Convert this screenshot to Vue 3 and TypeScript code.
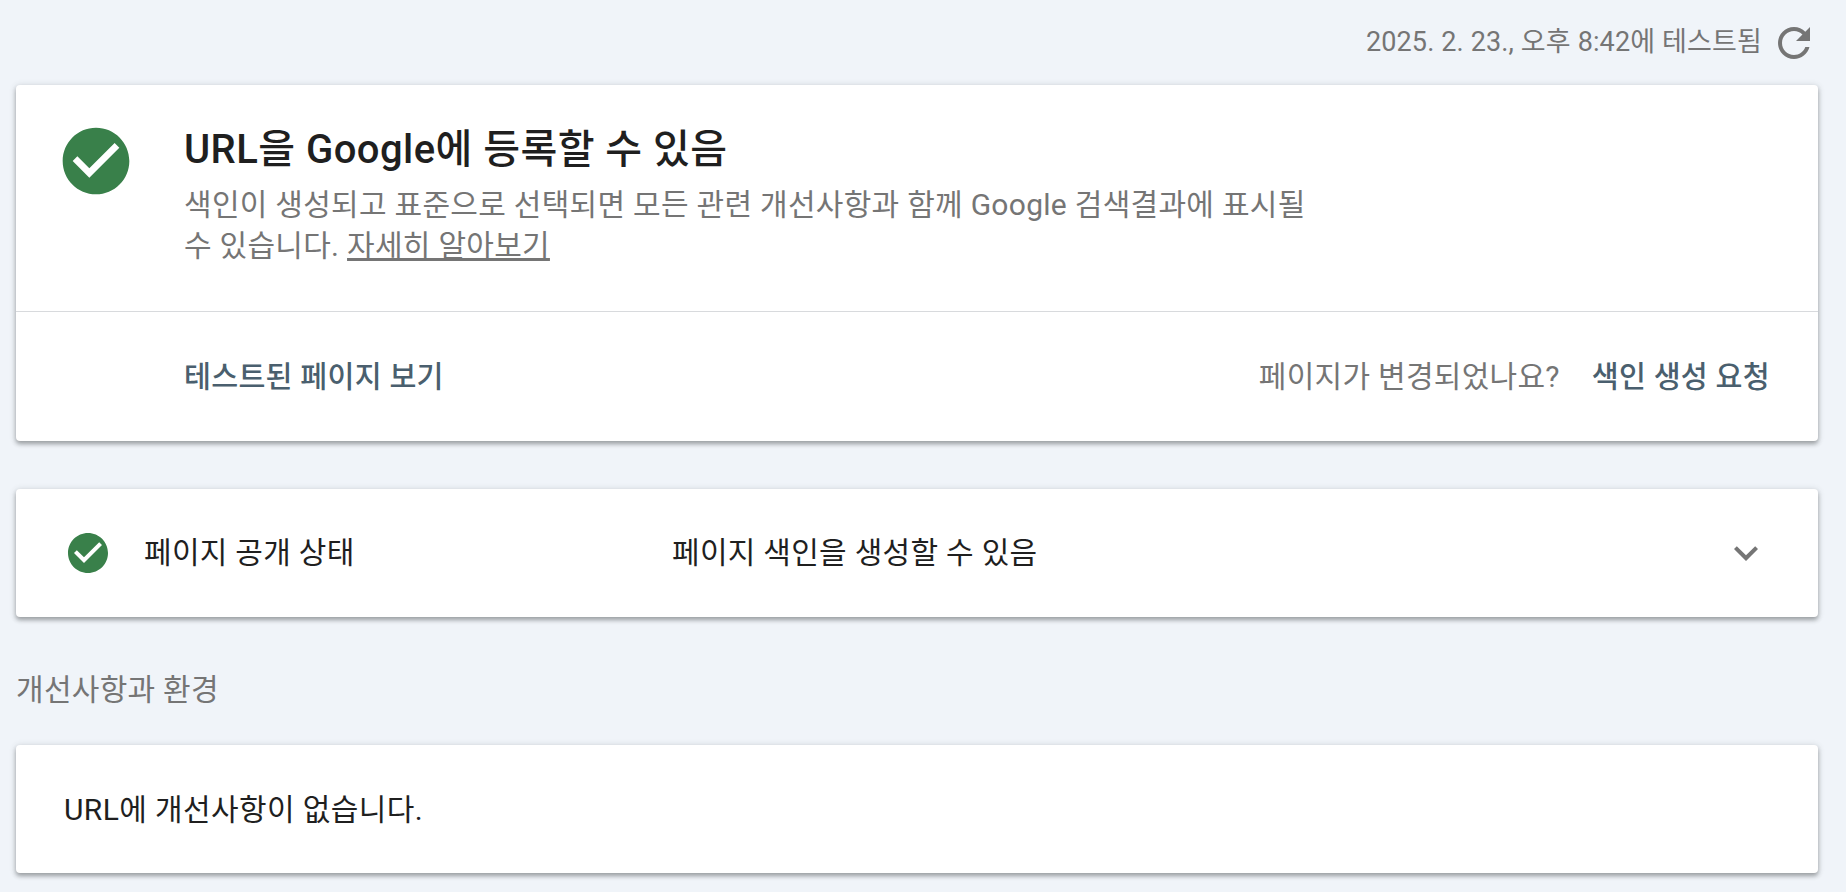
<script setup lang="ts">
const checkPath = 'M12 2C6.48 2 2 6.48 2 12s4.48 10 10 10 10-4.48 10-10S17.52 2 12 2zm-2 15l-5-5 1.41-1.41L10 14.17l7.59-7.59L19 8l-9 9z'
const refreshPath = 'M17.65 6.35C16.2 4.9 14.21 4 12 4c-4.42 0-7.99 3.58-7.99 8s3.57 8 7.99 8c3.73 0 6.84-2.55 7.73-6h-2.08c-.82 2.33-3.04 4-5.65 4-3.31 0-6-2.69-6-6s2.69-6 6-6c1.66 0 3.14.69 4.22 1.78L13 11h7V4l-2.35 2.35z'
const expandPath = 'M16.59 8.59L12 13.17 7.41 8.59 6 10l6 6 6-6z'
</script>

<template>
  <main class="page">
    <header class="stamp">
      <span class="stamp-text">2025. 2. 23., 오후 8:42에 테스트됨</span>
      <svg class="icon-48 grey" viewBox="0 0 24 24"><path :d="refreshPath" /></svg>
    </header>

    <section class="card result">
      <div class="result-top">
        <svg class="icon-80 green" viewBox="0 0 24 24"><path :d="checkPath" /></svg>
        <div class="result-copy">
          <h1 class="title">URL을 Google에 등록할 수 있음</h1>
          <p class="desc">색인이 생성되고 표준으로 선택되면 모든 관련 개선사항과 함께 Google 검색결과에 표시될 수 있습니다. <a class="learn">자세히 알아보기</a></p>
        </div>
      </div>
      <div class="result-actions">
        <span class="action">테스트된 페이지 보기</span>
        <span class="actions-right">
          <span class="question">페이지가 변경되었나요?</span>
          <span class="action">색인 생성 요청</span>
        </span>
      </div>
    </section>

    <section class="card status">
      <svg class="icon-48 green" viewBox="0 0 24 24"><path :d="checkPath" /></svg>
      <span class="status-label">페이지 공개 상태</span>
      <span class="status-value">페이지 색인을 생성할 수 있음</span>
      <svg class="icon-48 grey chevron" viewBox="0 0 24 24"><path :d="expandPath" /></svg>
    </section>

    <h2 class="section-title">개선사항과 환경</h2>

    <section class="card empty"><span>URL에 개선사항이 없습니다.</span></section>
  </main>
</template>

<style>
html, body { margin: 0; background: #f0f4f9; }
</style>

<style scoped>
.page {
  box-sizing: border-box;
  width: 1846px;
  height: 892px;
  padding: 0 28px 0 16px;
  background: #f0f4f9;
  font-family: Roboto, "Noto Sans CJK KR", sans-serif;
  color: #1f1f1f;
  letter-spacing: 0.28px;
  overflow: hidden;
}
.stamp {
  display: flex;
  justify-content: flex-end;
  align-items: center;
  height: 85px;
  gap: 8px;
  color: #757575;
  font-size: 27px;
  letter-spacing: 0.14px;
}
.stamp-text { margin-bottom: 6px; }
.icon-48 { width: 48px; height: 48px; flex: none; display: block; }
.icon-80 { width: 80px; height: 80px; flex: none; display: block; }
.green { fill: #39804a; }
.grey { fill: #757575; }
.card {
  background: #fff;
  border-radius: 4px;
  box-shadow: 0 3px 4px rgba(60, 64, 67, 0.4), 0 1px 6px 1px rgba(60, 64, 67, 0.14);
}
.result { height: 356px; }
.result-top {
  box-sizing: border-box;
  height: 227px;
  display: flex;
  padding: 36px 0 0 40px;
  gap: 48px;
  border-bottom: 1px solid #d8dadd;
}
.result-copy { width: 1150px; }
.title {
  margin: 0;
  font-size: 40px;
  font-weight: 500;
  line-height: 57px;
  letter-spacing: 0.45px;
}
.desc {
  margin: 6px 0 0;
  font-size: 30px;
  line-height: 41px;
  color: #757575;
}
.learn { text-decoration: underline; }
.result-actions {
  height: 129px;
  display: flex;
  align-items: center;
  justify-content: space-between;
  padding: 0 48px 6px 168px;
  box-sizing: border-box;
}
.actions-right { display: flex; align-items: center; gap: 32px; }
.action { font-size: 29.25px; font-weight: 500; color: #4a5f6e; }
.question { font-size: 30px; color: #757575; }
.status {
  margin-top: 48px;
  height: 128px;
  box-sizing: border-box;
  display: flex;
  align-items: center;
  padding: 0 48px;
  font-size: 30px;
}
.status-label { margin-left: 32px; width: 528px; margin-bottom: 6px; }
.status-value { flex: 1; margin-bottom: 6px; }
.section-title {
  margin: 0;
  height: 128px;
  box-sizing: border-box;
  padding-top: 12px;
  display: flex;
  align-items: center;
  font-size: 30px;
  font-weight: 400;
  color: #757575;
}
.empty {
  height: 128px;
  display: flex;
  align-items: center;
  padding-left: 48px;
  font-size: 30px;
  letter-spacing: 0.38px;
}
.empty span { margin-bottom: 4px; }
</style>
